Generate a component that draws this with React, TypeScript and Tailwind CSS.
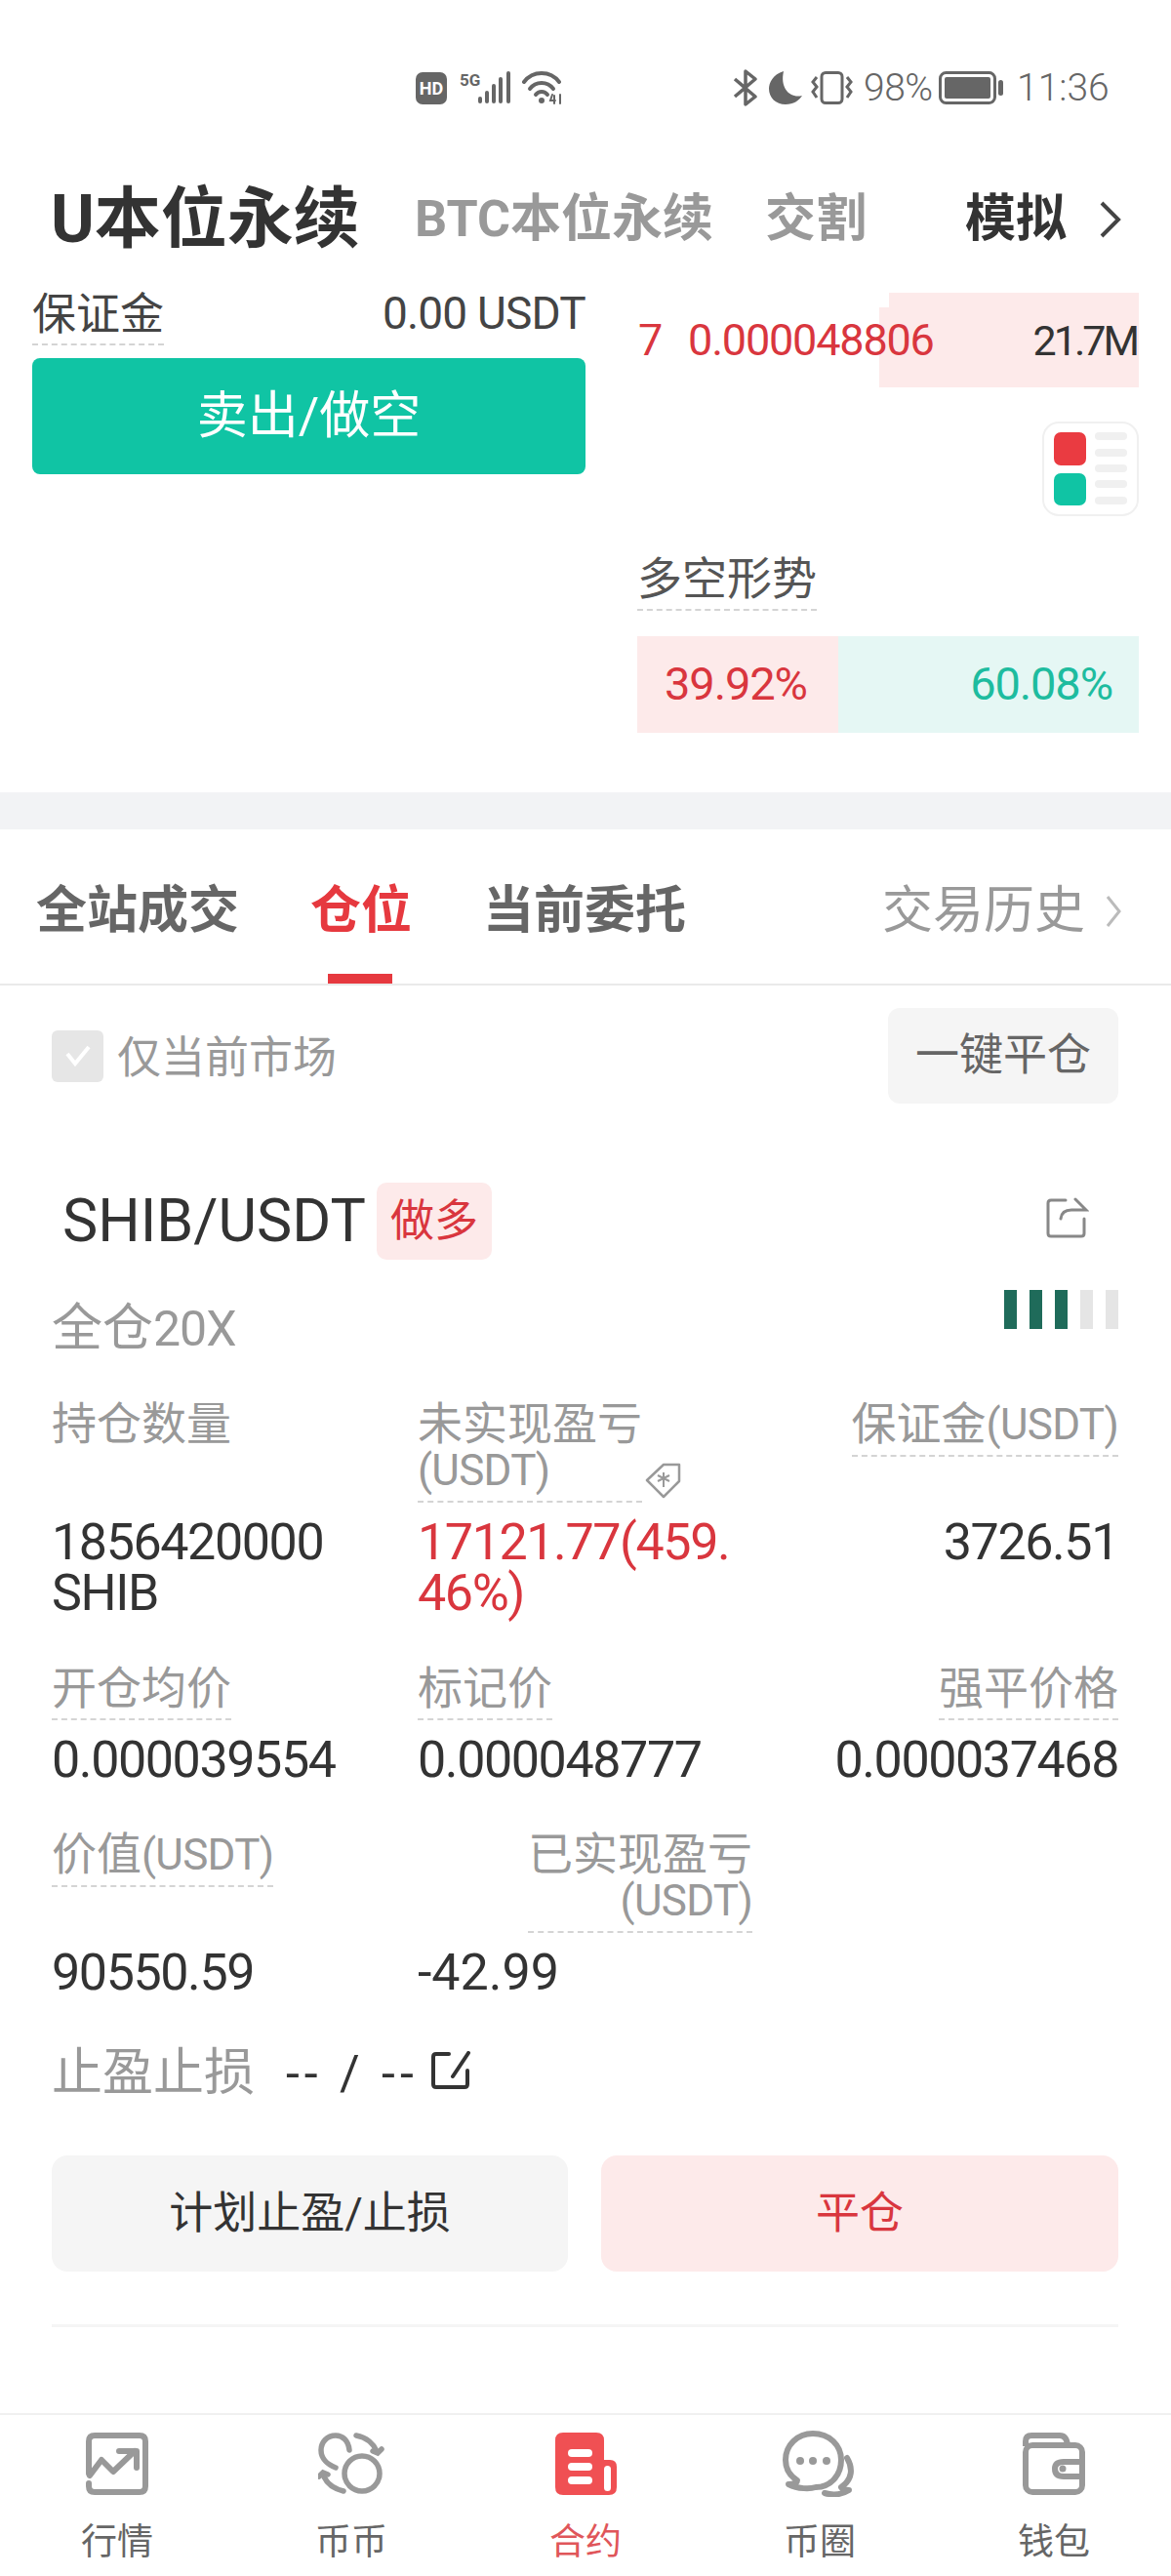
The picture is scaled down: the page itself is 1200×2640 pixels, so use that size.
import type { ReactNode } from 'react';

const fontStack = "font-['Roboto','Noto_Sans_CJK_SC',sans-serif]";

// dashed underline used on every tappable label
function Dotted({ children, className = '' }: { children: ReactNode; className?: string }) {
  return (
    <span className={'inline-block border-b-2 border-dashed border-[#d4d4d4] pb-[7px] whitespace-nowrap ' + className}>
      {children}
    </span>
  );
}

function Usdt() {
  return <span className="text-[44px] tracking-[-0.7px]">(USDT)</span>;
}

function StatusBar() {
  return (
    <div className="flex h-[36px] items-center mt-[72px] pl-[426px] text-[#666]">
      <svg width="32" height="33" viewBox="0 0 32 33">
        <rect width="32" height="33" rx="7" fill="#666" />
        <text x="16" y="23" textAnchor="middle" fontSize="18" fontWeight="700" fill="#fff" fontFamily="Roboto">HD</text>
      </svg>
      <svg className="ml-[13px]" width="54" height="34" viewBox="0 0 54 34">
        <text x="0" y="15" fontSize="17" fontWeight="700" fill="#666" fontFamily="Roboto">5G</text>
        <rect x="19" y="26" width="4" height="7" rx="2" fill="#666" />
        <rect x="26" y="20" width="4" height="13" rx="2" fill="#666" />
        <rect x="33" y="13" width="4" height="20" rx="2" fill="#666" />
        <rect x="40" y="6" width="4" height="27" rx="2" fill="#666" />
        <rect x="48" y="0" width="4" height="33" rx="2" fill="#666" />
      </svg>
      <svg className="ml-[10px]" width="42" height="34" viewBox="0 0 42 34" fill="none" stroke="#666" strokeWidth="4" strokeLinecap="round">
        <path d="M2 11 C11 -1 29 -1 38 11" />
        <path d="M8 18 C14 10 26 10 32 18" />
        <path d="M14 24 C17 20 23 20 26 24" />
        <circle cx="20" cy="30" r="3" fill="#666" stroke="none" />
        <path d="M31 24 L29 30 H34 M33 25 V33 M39 24 V33" strokeWidth="2" />
      </svg>
      <svg className="ml-[174px]" width="26" height="38" viewBox="0 0 26 38" fill="none" stroke="#666" strokeWidth="3.5" strokeLinejoin="round">
        <path d="M2 10 L23 28 L13 36 V2 L23 10 L2 28" />
      </svg>
      <svg className="ml-[11px]" width="34" height="34" viewBox="0 0 34 34">
        <path d="M15 0 C4 3 0 12 0 18 C0 27 7 34 17 34 C25 34 31 30 34 25 C22 28 11 18 15 0 Z" fill="#666" />
      </svg>
      <svg className="ml-[9px]" width="44" height="34" viewBox="0 0 44 34" fill="none" stroke="#666">
        <rect x="11" y="1.5" width="21" height="31" rx="4" strokeWidth="3" />
        <path d="M6 6 L2 11 L6 16 L2 21 L6 27 M37 6 L41 11 L37 16 L41 21 L37 27" strokeWidth="3" />
      </svg>
      <span className="ml-[10px] w-[71px] text-[39px] leading-[36px] font-light tracking-[-0.5px]">98%</span>
      <svg className="ml-[6px]" width="66" height="34" viewBox="0 0 66 34">
        <rect x="1.5" y="1.5" width="56" height="31" rx="6" fill="none" stroke="#666" strokeWidth="3" />
        <rect x="6" y="6" width="47" height="22" rx="2" fill="#666" />
        <rect x="61" y="9" width="5" height="16" rx="2.5" fill="#666" />
      </svg>
      <span className="ml-[14px] text-[39px] leading-[36px] font-light">11:36</span>
    </div>
  );
}

function Header() {
  return (
    <div className="flex h-[72px] items-center mt-[81px] font-bold">
      <span className="ml-[52px] w-[373px] text-[68px] leading-[72px] text-[#333]">U本位永续</span>
      <span className="w-[359px] text-[52px] leading-[72px] text-[#999]">BTC本位永续</span>
      <span className="w-[205px] text-[52px] leading-[72px] text-[#999]">交割</span>
      <span className="text-[52px] leading-[72px] text-[#333]">模拟</span>
      <svg className="ml-[33px]" width="24" height="38" viewBox="0 0 24 38" fill="none" stroke="#444" strokeWidth="4">
        <path d="M3 2 L20 19 L3 36" />
      </svg>
    </div>
  );
}

function TradePanel() {
  return (
    <div className="flex mt-[39px]">
      <div className="ml-[33px] w-[567px]">
        <div className="flex h-[67px] items-start justify-between">
          <Dotted className="text-[45px] leading-[45px] text-[#444]">保证金</Dotted>
          <span className="text-[46px] leading-[45px] text-[#444] tracking-[-0.8px] mt-[-1px]">0.00 USDT</span>
        </div>
        <div className="flex h-[119px] items-center justify-center rounded-[8px] bg-[#10c4a4] text-[52px] text-white">
          卖出/做空
        </div>
      </div>
      <div className="ml-[53px] w-[514px] flex flex-col">
        <div className="relative h-[97px]">
          <div className="absolute right-0 top-0 h-[97px] w-[256px] bg-[#fdeaea]" />
          <div className="absolute right-0 top-[15px] h-[82px] w-[266px] bg-[#fdeaea]" />
          <div className="relative flex h-[97px] items-center text-[45px] leading-[50px] tracking-[-1.2px]">
            <span className="ml-[1px] text-[#d9363e]">7</span>
            <span className="ml-[27px] text-[#d9363e]">0.000048806</span>
            <span className="ml-auto mr-[2px] text-[43px] text-[#333] tracking-[-3px]">21.7M</span>
          </div>
        </div>
        <svg className="ml-[415px] mt-[35px]" width="99" height="97" viewBox="0 0 99 97">
          <rect x="1" y="1" width="97" height="95" rx="16" fill="#fff" stroke="#f0f0f0" strokeWidth="2" />
          <rect x="12" y="11" width="33" height="34" rx="7" fill="#ea3b41" />
          <rect x="12" y="53" width="33" height="33" rx="7" fill="#10c4a4" />
          {[11, 28, 44, 60, 77].map((y) => (
            <rect key={y} x="54" y={y} width="33" height="8" rx="4" fill="#f0f0f0" />
          ))}
        </svg>
        <div className="mt-[41px] h-[58px]">
          <Dotted className="text-[46px] leading-[47px] text-[#555]">多空形势</Dotted>
        </div>
        <div className="mt-[24px] flex h-[99px] items-center text-[47px] tracking-[-1.1px]">
          <div className="flex h-full w-[206px] items-center pl-[28px] bg-[#fdeaea] text-[#d9363e]">39.92%</div>
          <div className="flex h-full flex-1 items-center justify-end pr-[27px] bg-[#e5f7f4] text-[#1ebc9f]">60.08%</div>
        </div>
      </div>
    </div>
  );
}

function ListTabs() {
  return (
    <div className="flex h-[160px] shrink-0 items-center border-b-2 border-[#eaeaea] pl-[37px] pr-[50px] pt-[10px] text-[52px] font-bold text-[#666]">
      <span>全站成交</span>
      <span className="relative ml-[73px] flex h-full items-center text-[#e6393f]">
        仓位
        <span className="absolute bottom-0 left-[18px] h-[10px] w-[66px] bg-[#e6393f]" />
      </span>
      <span className="ml-[73px]">当前委托</span>
      <span className="ml-auto font-normal text-[#999]">交易历史</span>
      <svg className="ml-[20px]" width="18" height="34" viewBox="0 0 18 34" fill="none" stroke="#bbb" strokeWidth="3">
        <path d="M3 2 L15 17 L3 32" />
      </svg>
    </div>
  );
}

function PositionCard() {
  const labelCls = 'text-[46px] leading-[47px] text-[#999]';
  const valueCls = 'text-[52px] leading-[52px] tracking-[-1.4px]';
  return (
    <div className="pl-[53px] pr-[54px]">
      <div className="flex h-[98px] items-center justify-between mt-[23px]">
        <div className="flex items-center">
          <span className="flex h-[53px] w-[53px] items-center justify-center rounded-[6px] bg-[#e6e6e6]">
            <svg width="28" height="24" viewBox="0 0 28 24" fill="none" stroke="#fff" strokeWidth="4">
              <path d="M3 10 L11 20 L25 3" />
            </svg>
          </span>
          <span className="ml-[14px] mt-[5px] text-[45px] text-[#999]">仅当前市场</span>
        </div>
        <div className="flex h-[98px] w-[236px] items-center justify-center rounded-[12px] bg-[#f5f5f5] text-[45px] text-[#666]">
          一键平仓
        </div>
      </div>

      <div className="flex h-[79px] items-center mt-[81px]">
        <span className="ml-[11px] text-[61px] text-[#333]">SHIB/USDT</span>
        <span className="ml-[11px] flex h-[79px] w-[118px] items-center justify-center rounded-[10px] bg-[#fdeaea] text-[45px] text-[#d9363e]">
          做多
        </span>
        <svg className="ml-auto mr-[30px] mb-[8px]" width="44" height="42" viewBox="0 0 44 42" fill="none" stroke="#888" strokeWidth="3" strokeLinecap="round">
          <path d="M20 3 H5 Q2 3 2 6 V37 Q2 40 5 40 H36 Q39 40 39 37 V22" />
          <path d="M30 2 L41 13 H26 Q16 13 15 22" />
        </svg>
      </div>

      <div className="flex h-[114px] items-start justify-between mt-[31px]">
        <span className="mt-[10px] text-[52px] leading-[60px] text-[#999]">
          全仓<span className="text-[50px] tracking-[-1px]">20X</span>
        </span>
        <div className="flex gap-[13px]">
          {['bg-[#1f6b5a]', 'bg-[#1f6b5a]', 'bg-[#1f6b5a]', 'bg-[#e5e5e5]', 'bg-[#e5e5e5]'].map((c, i) => (
            <span key={i} className={'h-[40px] w-[13px] ' + c} />
          ))}
        </div>
      </div>

      <div className="grid grid-cols-[375px_375px_1fr]">
        <div className={labelCls}>持仓数量</div>
        <div className={'relative ' + labelCls}>
          <Dotted className="w-[230px]">未实现盈亏<br /><Usdt /></Dotted>
          <svg className="absolute left-[232px] top-[62px]" width="40" height="38" viewBox="0 0 40 38" fill="none" stroke="#999" strokeWidth="2.5">
            <path d="M3 19 L20 3 L36 3 L36 20 L20 36 Z" strokeLinejoin="round" />
            <path d="M14 20 L26 14 M20 11 V26 M14 14 L26 20" strokeWidth="2" />
          </svg>
        </div>
        <div className={'text-right ' + labelCls}><Dotted>保证金<Usdt /></Dotted></div>

        <div className={'pt-[15px] text-[#333] ' + valueCls}>1856420000<br />SHIB</div>
        <div className={'pt-[15px] text-[#d9363e] ' + valueCls}>17121.77(459.<br />46%)</div>
        <div className={'pt-[15px] text-right text-[#333] ' + valueCls}>3726.51</div>

        <div className={'mt-[48px] ' + labelCls}><Dotted>开仓均价</Dotted></div>
        <div className={'mt-[48px] ' + labelCls}><Dotted>标记价</Dotted></div>
        <div className={'mt-[48px] text-right ' + labelCls}><Dotted>强平价格</Dotted></div>

        <div className={'pt-[15px] text-[#333] ' + valueCls}>0.000039554</div>
        <div className={'pt-[15px] text-[#333] ' + valueCls}>0.000048777</div>
        <div className={'pt-[15px] text-right text-[#333] ' + valueCls}>0.000037468</div>

        <div className={'mt-[47px] ' + labelCls}><Dotted>价值<Usdt /></Dotted></div>
        <div className={'mt-[47px] ml-[113px] w-[230px] text-right ' + labelCls}><Dotted>已实现盈亏<br /><Usdt /></Dotted></div>
        <div />

        <div className={'pt-[15px] text-[#333] ' + valueCls}>90550.59</div>
        <div className="pt-[15px] text-[52px] leading-[52px] text-[#333]">-42.99</div>
        <div />
      </div>

      <div className="flex h-[52px] items-center mt-[51px]">
        <span className="text-[52px] text-[#999]">止盈止损</span>
        <span className="ml-[32px] text-[50px] text-[#333] tracking-[5px]">-- / --</span>
        <svg className="ml-[12px] mb-[6px]" width="43" height="40" viewBox="0 0 43 40" fill="none" stroke="#333" strokeWidth="4" strokeLinecap="round">
          <path d="M19 3 H6 Q3 3 3 6 V34 Q3 37 6 37 H35 Q38 37 38 34 V20" />
          <path d="M39 2 L23 26" />
        </svg>
      </div>

      <div className="mt-[58px] flex gap-[34px]">
        <div className="flex h-[119px] w-[529px] items-center justify-center rounded-[16px] bg-[#f5f5f5] text-[45px] text-[#333]">
          计划止盈/止损
        </div>
        <div className="flex h-[119px] flex-1 items-center justify-center rounded-[16px] bg-[#fdeaea] text-[45px] text-[#d9363e]">
          平仓
        </div>
      </div>

      <div className="mt-[54px] h-[3px] bg-[#f5f5f5]" />
    </div>
  );
}

function NavIcon({ name }: { name: string }) {
  if (name === 'market') {
    return (
      <svg width="64" height="64" viewBox="0 0 64 64" fill="none" stroke="#999" strokeWidth="6" strokeLinecap="round" strokeLinejoin="round">
        <path d="M3 42 V9 Q3 3 9 3 H55 Q61 3 61 9 V55 Q61 61 55 61 H9 Q3 61 3 55 V52" />
        <path d="M4 44 L16 28 L28 40 L50 19" strokeWidth="6" />
        <path d="M34 19 H52 V36" />
      </svg>
    );
  }
  if (name === 'spot') {
    return (
      <svg width="68" height="64" viewBox="0 0 68 64" fill="none" stroke="#999" strokeWidth="5.5" strokeLinecap="round">
        <circle cx="45" cy="42" r="18" />
        <path d="M32 18 C31 8 25 3 18 3 C9 3 3 10 3 18 C3 27 10 33 18 36" />
        <path d="M39 3 C50 5 57 12 60 19" />
        <path d="M56 19 L61 21 L65 17" />
        <path d="M26 60 C14 57 7 50 5 42" />
        <path d="M1 45 L5 41 L10 43" />
      </svg>
    );
  }
  if (name === 'contract') {
    return (
      <svg width="63" height="64" viewBox="0 0 63 64">
        <path d="M8 0 H42 Q50 0 50 8 V28 H56 Q63 28 63 35 V56 Q63 64 55 64 H8 Q0 64 0 56 V8 Q0 0 8 0 Z" fill="#f05053" />
        <rect x="13" y="17" width="25" height="8" rx="4" fill="#fff" />
        <rect x="13" y="31" width="25" height="8" rx="4" fill="#fff" />
        <rect x="13" y="45" width="25" height="8" rx="4" fill="#fff" />
        <rect x="50" y="34" width="7" height="26" rx="3.5" fill="#fff" />
      </svg>
    );
  }
  if (name === 'circle') {
    return (
      <svg width="76" height="68" viewBox="0 0 76 68" fill="none" stroke="#999" strokeWidth="6" strokeLinecap="round" strokeLinejoin="round">
        <path d="M31 3 C15 3 3 15 3 30 C3 39 7 46 15 51 C15 54 11 55 6 55 C16 60 28 60 34 58 C49 58 60 46 60 30 C60 15 48 3 31 3 Z" />
        <circle cx="18" cy="31" r="4" fill="#999" stroke="none" />
        <circle cx="31" cy="31" r="4" fill="#999" stroke="none" />
        <circle cx="45" cy="31" r="4" fill="#999" stroke="none" />
        <path d="M66 28 C72 38 72 50 60 58 C62 61 65 61 68 61 C60 66 50 66 43 64" />
      </svg>
    );
  }
  return (
    <svg width="64" height="64" viewBox="0 0 64 64" fill="none" stroke="#999" strokeWidth="6" strokeLinejoin="round">
      <path d="M3 14 V9 Q3 3 9 3 H38 Q45 3 46 13" />
      <rect x="3" y="13" width="58" height="48" rx="7" />
      <path d="M61 30 H42 Q33 30 33 37 Q33 45 42 45 H61" />
      <circle cx="41" cy="37" r="3.5" fill="#999" stroke="none" />
    </svg>
  );
}

const navItems = [
  { key: 'market', label: '行情' },
  { key: 'spot', label: '币币' },
  { key: 'contract', label: '合约', active: true },
  { key: 'circle', label: '币圈' },
  { key: 'wallet', label: '钱包' },
];

function BottomNav() {
  return (
    <div className="mt-[88px] grid h-[167px] shrink-0 grid-cols-5 border-t-2 border-[#f0f0f0]">
      {navItems.map((item) => (
        <div key={item.key} className="flex flex-col items-center pt-[18px]">
          <div className="flex h-[64px] items-center">
            <NavIcon name={item.key} />
          </div>
          <span className={'mt-[27px] text-[37px] leading-[44px] ' + (item.active ? 'text-[#e0565a]' : 'text-[#666]')}>
            {item.label}
          </span>
        </div>
      ))}
    </div>
  );
}

export default function App() {
  return (
    <div className={'flex h-[2640px] w-[1200px] flex-col overflow-hidden bg-white ' + fontStack}>
      <StatusBar />
      <Header />
      <div className="h-[551px] shrink-0">
        <TradePanel />
      </div>
      <div className="h-[38px] shrink-0 bg-[#f2f3f5]" />
      <ListTabs />
      <PositionCard />
      <BottomNav />
    </div>
  );
}
